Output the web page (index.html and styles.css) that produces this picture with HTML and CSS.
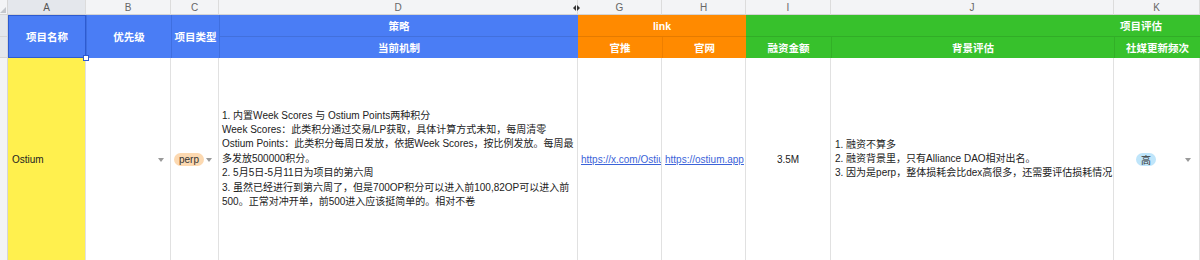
FILE: index.html
```html
<!DOCTYPE html>
<html lang="zh-CN">
<head>
<meta charset="utf-8">
<title>Sheet</title>
<link rel="stylesheet" href="styles.css">
</head>
<body>
<div class="sheet">
  <!-- column letters -->
  <div class="corner"><span class="corner-tri"></span></div>
  <div class="colhdr sel">A</div>
  <div class="colhdr">B</div>
  <div class="colhdr">C</div>
  <div class="colhdr colhdr-d"><span class="letter">D</span><span class="resize"><i class="tl"></i><i class="tr"></i></span></div>
  <div class="colhdr">G</div>
  <div class="colhdr">H</div>
  <div class="colhdr">I</div>
  <div class="colhdr">J</div>
  <div class="colhdr">K</div>

  <!-- header row 1 -->
  <div class="rowhdr r1"></div>
  <div class="h blue span2 selected">项目名称<span class="handle"></span></div>
  <div class="h blue span2 sep">优先级</div>
  <div class="h blue span2 sep">项目类型</div>
  <div class="h blue sep bb">策略</div>
  <div class="h orange link-span bb">link</div>
  <div class="h green eval-span bb">项目评估</div>

  <!-- header row 2 -->
  <div class="rowhdr r2"></div>
  <div class="h blue sep">当前机制</div>
  <div class="h orange">官推</div>
  <div class="h orange sep-o">官网</div>
  <div class="h green">融资金额</div>
  <div class="h green sep-g">背景评估</div>
  <div class="h green sep-g">社媒更新频次</div>

  <!-- data row -->
  <div class="rowhdr r3"></div>
  <div class="c yellow name">Ostium</div>
  <div class="c drop"><span class="arrow"></span></div>
  <div class="c drop"><span class="tag perp">perp</span><span class="arrow"></span></div>
  <div class="c text">
    <div class="line">1. 内置Week Scores 与 Ostium Points两种积分</div>
    <div class="line">Week Scores：此类积分通过交易/LP获取，具体计算方式未知，每周清零</div>
    <div class="line">Ostium Points：此类积分每周日发放，依据Week Scores，按比例发放。每周最</div>
    <div class="line">多发放500000积分。</div>
    <div class="line">2. 5月5日-5月11日为项目的第六周</div>
    <div class="line">3. 虽然已经进行到第六周了，但是700OP积分可以进入前100,82OP可以进入前</div>
    <div class="line">500。正常对冲开单，前500进入应该挺简单的。相对不卷</div>
  </div>
  <div class="c linkcell"><a class="lnk" href="#">https://x.com/Ostium_app</a></div>
  <div class="c linkcell"><a class="lnk" href="#">https://ostium.app</a></div>
  <div class="c center">3.5M</div>
  <div class="c text jtext">
    <div class="line">1. 融资不算多</div>
    <div class="line">2. 融资背景里，只有Alliance DAO相对出名。</div>
    <div class="line">3. 因为是perp，整体损耗会比dex高很多，还需要评估损耗情况</div>
  </div>
  <div class="c drop kcell"><span class="tag high">高</span><span class="arrow"></span></div>
</div>
</body>
</html>
```

FILE: styles.css
```css
* { box-sizing: border-box; }
html, body {
  margin: 0;
  padding: 0;
  width: 1200px;
  height: 260px;
  overflow: hidden;
  background: #ffffff;
}
body {
  font-family: "Liberation Sans", "Noto Sans CJK SC", sans-serif;
  font-size: 10px;
  color: #222;
}
.sheet {
  display: grid;
  grid-template-columns: 8px 78px 85px 48px 359px 84px 84px 85px 283px 86px;
  grid-template-rows: 15px 22px 21px 202px;
  width: 1200px;
}
.corner {
  background: #f3f4f6;
  border-right: 1px solid #d6d6d6;
  border-bottom: 1px solid #d6d6d6;
  position: relative;
}
.corner-tri {
  position: absolute;
  right: 1px;
  bottom: 1px;
  width: 0;
  height: 0;
  border-left: 6px solid transparent;
  border-bottom: 6px solid #c4c7cc;
}
.colhdr {
  background: #f3f4f6;
  border-right: 1px solid #dcdcdc;
  border-bottom: 1px solid #d4d4d4;
  color: #666;
  font-size: 10px;
  display: flex;
  align-items: center;
  justify-content: center;
}
.colhdr.sel { background: #e4e7ec; color: #555; }
.colhdr-d { position: relative; }
.resize {
  position: absolute;
  right: -3px;
  top: 4px;
  display: flex;
  gap: 1px;
  align-items: center;
  height: 7px;
  z-index: 2;
}
.resize i { display: block; width: 0; height: 0; }
.resize .tl { border-top: 3px solid transparent; border-bottom: 3px solid transparent; border-right: 3px solid #333; }
.resize .tr { border-top: 3px solid transparent; border-bottom: 3px solid transparent; border-left: 3px solid #333; }

.rowhdr {
  background: #f3f4f6;
  border-right: 1px solid #d6d6d6;
  border-bottom: 1px solid #d6d6d6;
}
.rowhdr.r1, .rowhdr.r2 { background: #e4e7ec; }
.r3 { border-bottom: none; }

.h {
  color: #ffffff;
  font-weight: bold;
  font-size: 10.5px;
  display: flex;
  align-items: center;
  justify-content: center;
  white-space: nowrap;
}
.blue { background: #4a7df5; }
.orange { background: #ff8a00; }
.green { background: #37c12c; }
.span2 { grid-row: span 2; }
.sep { border-left: 1px solid #3f6fe0; }
.bb { border-bottom: 1px solid rgba(0,0,0,0.10); }
.sep-o { border-left: 1px solid #ee7f00; }
.sep-g { border-left: 1px solid #32b027; }
.link-span { grid-column: span 2; }
.eval-span {
  grid-column: span 3;
  justify-content: flex-end;
  padding-right: 38px;
}
.selected {
  position: relative;
  box-shadow: inset 0 0 0 1px #2d5bd0;
}
.handle {
  position: absolute;
  right: -3px;
  bottom: -3px;
  width: 6px;
  height: 6px;
  background: #ffffff;
  border: 1px solid #2d5bd0;
  z-index: 3;
}

.c {
  border-right: 1px solid #e1e1e1;
  display: flex;
  align-items: center;
  overflow: hidden;
  white-space: nowrap;
  position: relative;
}
.yellow { background: #fff04e; }
.name { padding-left: 4px; color: #222; }
.drop { justify-content: flex-end; padding: 0 6px 0 3px; }
.drop:has(.tag) { justify-content: space-between; }
.arrow {
  width: 0;
  height: 0;
  border-left: 3px solid transparent;
  border-right: 3px solid transparent;
  border-top: 4px solid #9a9a9a;
  margin-top: 1px;
}
.tag {
  display: inline-flex;
  align-items: center;
  justify-content: center;
  height: 13px;
  border-radius: 7px;
  padding: 0 5px;
  color: #333;
}
.perp { background: #fcd9b1; width: 30px; }
.high { background: #bfe5fa; width: 20px; padding: 0; }
.drop.kcell { justify-content: flex-end; gap: 29px; padding-right: 8px; }

.text {
  flex-direction: column;
  align-items: flex-start;
  justify-content: center;
  padding-left: 3px;
  line-height: 14.4px;
}
.jtext { padding-left: 4px; line-height: 14px; }
.line { white-space: nowrap; }
.linkcell { padding-left: 3px; }
.lnk {
  display: block;
  width: 100%;
  overflow: hidden;
  color: #3b63d9;
  text-decoration: underline;
}
.center { justify-content: center; }
```
